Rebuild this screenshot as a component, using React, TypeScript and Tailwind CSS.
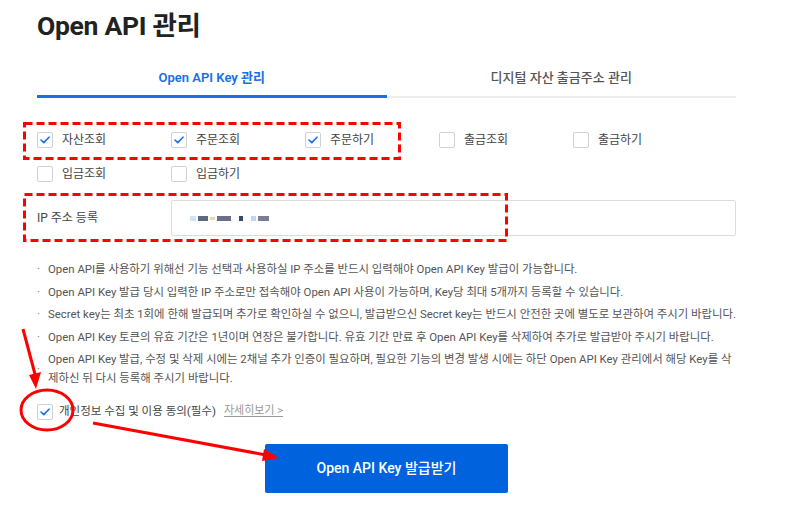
import React from "react";

const font = { fontFamily: "Roboto, 'Noto Sans CJK KR', sans-serif" };

function Check({ checked }: { checked: boolean }) {
  return (
    <span className="flex h-4 w-4 shrink-0 items-center justify-center rounded-[2px] border border-[#cfd3d8] bg-white">
      {checked && (
        <svg width="10" height="8" viewBox="0 0 10 8" fill="none">
          <path d="M1 4 L3.8 6.6 L9 1.2" stroke="#1a6ee8" strokeWidth="1.6" strokeLinecap="round" strokeLinejoin="round" />
        </svg>
      )}
    </span>
  );
}

const perms: { label: string; checked: boolean }[] = [
  { label: "자산조회", checked: true },
  { label: "주문조회", checked: true },
  { label: "주문하기", checked: true },
  { label: "출금조회", checked: false },
  { label: "출금하기", checked: false },
  { label: "입금조회", checked: false },
  { label: "입금하기", checked: false },
];

const notes: React.ReactNode[] = [
  "Open API를 사용하기 위해선 기능 선택과 사용하실 IP 주소를 반드시 입력해야 Open API Key 발급이 가능합니다.",
  "Open API Key 발급 당시 입력한 IP 주소로만 접속해야 Open API 사용이 가능하며, Key당 최대 5개까지 등록할 수 있습니다.",
  "Secret key는 최초 1회에 한해 발급되며 추가로 확인하실 수 없으니, 발급받으신 Secret key는 반드시 안전한 곳에 별도로 보관하여 주시기 바랍니다.",
  "Open API Key 토큰의 유효 기간은 1년이며 연장은 불가합니다. 유효 기간 만료 후 Open API Key를 삭제하여 추가로 발급받아 주시기 바랍니다.",
  <>
    Open API Key 발급, 수정 및 삭제 시에는 2채널 추가 인증이 필요하며, 필요한 기능의 변경 발생 시에는 하단 Open API Key 관리에서 해당 Key를 삭
    <br />
    제하신 뒤 다시 등록해 주시기 바랍니다.
  </>,
];

export default function App() {
  return (
    <div className="relative h-[520px] w-[800px] overflow-hidden bg-white" style={font}>
      <div className="flex w-[699px] flex-col pl-[37px] pr-0 pt-[8px] box-content">
        <h1 className="text-[26.5px] font-bold leading-[36px] tracking-[-0.3px] text-[#222]">Open API 관리</h1>

        <div className="mt-[16px] flex">
          <div className="flex h-[38px] w-1/2 items-center justify-center border-b-[3px] border-[#1a6ee8] text-[13px] font-semibold text-[#1a6ee8]">
            Open API Key 관리
          </div>
          <div className="flex h-[38px] w-1/2 items-center justify-center border-b-2 border-[#eeeeee] pb-[1px] text-[13px] font-medium text-[#555]">
            디지털 자산 출금주소 관리
          </div>
        </div>

        <div className="mt-[25px] grid grid-cols-[134px_134px_134px_134px_134px]">
          {perms.map((p) => (
            <div key={p.label} className="flex h-[34px] items-center gap-[9px]">
              <Check checked={p.checked} />
              <span className="text-[12px] text-[#444]">{p.label}</span>
            </div>
          ))}
        </div>

        <div className="mt-[9px] flex items-center">
          <span className="w-[134px] text-[12px] text-[#444]">IP 주소 등록</span>
          <div className="flex h-[36px] flex-1 items-center rounded-[2px] border border-[#dcdcdc] bg-white pl-[18px]">
            <div className="flex items-center gap-[2px]">
              <span className="h-[5px] w-[6px] bg-[#cfe3f7]" />
              <span className="h-[5px] w-[10px] bg-[#5a6a80]" />
              <span className="h-[3px] w-[5px] bg-[#f2d4b0]" />
              <span className="h-[5px] w-[14px] bg-[#6c6f86]" />
              <span className="ml-[6px] h-[5px] w-[4px] bg-[#3b4a6a]" />
              <span className="ml-[6px] h-[5px] w-[5px] bg-[#bcd9f4]" />
              <span className="h-[5px] w-[11px] bg-[#7a7f95]" />
            </div>
          </div>
        </div>

        <ul className="mt-[24px] flex flex-col gap-[3.5px] text-[11.4px] leading-[19px] text-[#555]">
          {notes.map((n, i) => (
            <li key={i} className="flex items-center">
              <span className="w-[11px] shrink-0 text-[#777]">·</span>
              <span>{n}</span>
            </li>
          ))}
        </ul>

        <div className="mt-[15px] flex items-center">
          <Check checked />
          <span className="ml-[6px] text-[11.5px] text-[#444]">개인정보 수집 및 이용 동의(필수)</span>
          <span className="ml-[8px] text-[11px] text-[#999] underline underline-offset-2">자세히보기 &gt;</span>
        </div>

        <div className="mt-[24px] flex justify-center">
          <button className="h-[49px] w-[243px] rounded-[2px] bg-[#0063dd] text-[14px] font-medium text-white">
            Open API Key 발급받기
          </button>
        </div>
      </div>

      {/* red annotation overlays */}
      <svg className="pointer-events-none absolute left-0 top-0" width="800" height="520" viewBox="0 0 800 520">
        <rect x="24.5" y="123.5" width="375" height="35" fill="none" stroke="#ff0000" strokeWidth="3" strokeDasharray="8 4" />
        <rect x="24.5" y="194.5" width="482" height="46" fill="none" stroke="#ff0000" strokeWidth="3" strokeDasharray="8 4" />
        <line x1="23" y1="329" x2="36" y2="378" stroke="#ff0000" strokeWidth="3" />
        <polygon points="36,389 29,375 41,372" fill="#ff0000" />
        <ellipse cx="47" cy="410" rx="26" ry="20" fill="none" stroke="#ff0000" strokeWidth="3" />
        <line x1="93" y1="423" x2="266" y2="455" stroke="#ff0000" strokeWidth="3" />
        <polygon points="279,458 264,449 262,461" fill="#ff0000" />
      </svg>
    </div>
  );
}
